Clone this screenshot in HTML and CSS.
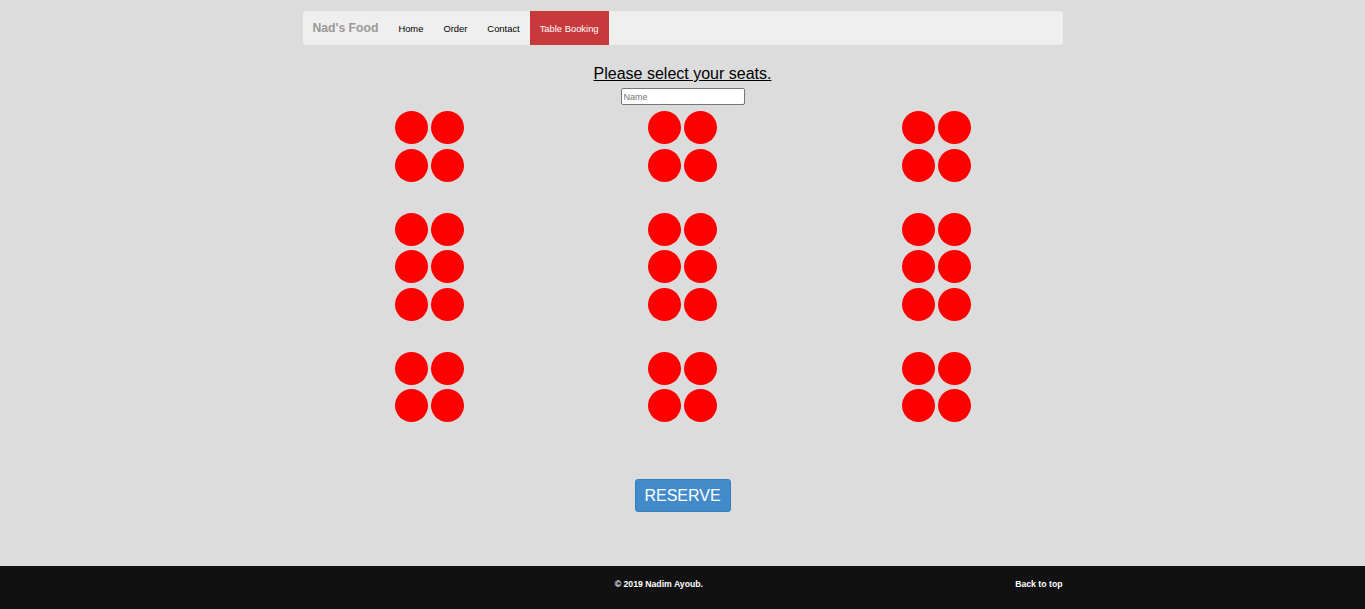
FILE: index.html
```html
<!DOCTYPE html>
<html>
<head>
<meta charset="utf-8">
<title>Table Booking</title>
<link rel="stylesheet" href="styles.css">
</head>
<body>
<div class="page">
  <nav class="navbar">
    <a class="brand" href="#">Nad's Food</a>
    <a class="nav-link" href="#">Home</a>
    <a class="nav-link" href="#">Order</a>
    <a class="nav-link" href="#">Contact</a>
    <a class="nav-link active" href="#">Table Booking</a>
  </nav>
  <main class="booking">
    <h2 class="title">Please select your seats.</h2>
    <input class="name-input" type="text" placeholder="Name">
    <div class="tables">
      <div class="table"><span class="seat"></span><span class="seat"></span><span class="seat"></span><span class="seat"></span></div>
      <div class="table"><span class="seat"></span><span class="seat"></span><span class="seat"></span><span class="seat"></span></div>
      <div class="table"><span class="seat"></span><span class="seat"></span><span class="seat"></span><span class="seat"></span></div>
      <div class="table"><span class="seat"></span><span class="seat"></span><span class="seat"></span><span class="seat"></span><span class="seat"></span><span class="seat"></span></div>
      <div class="table"><span class="seat"></span><span class="seat"></span><span class="seat"></span><span class="seat"></span><span class="seat"></span><span class="seat"></span></div>
      <div class="table"><span class="seat"></span><span class="seat"></span><span class="seat"></span><span class="seat"></span><span class="seat"></span><span class="seat"></span></div>
      <div class="table"><span class="seat"></span><span class="seat"></span><span class="seat"></span><span class="seat"></span></div>
      <div class="table"><span class="seat"></span><span class="seat"></span><span class="seat"></span><span class="seat"></span></div>
      <div class="table"><span class="seat"></span><span class="seat"></span><span class="seat"></span><span class="seat"></span></div>
    </div>
    <button class="reserve" type="button">RESERVE</button>
  </main>
</div>
<footer class="footer">
  <div class="footer-inner">
    <p class="copy">© 2019 Nadim Ayoub.</p>
    <a class="top-link" href="#">Back to top</a>
  </div>
</footer>
</body>
</html>
```

FILE: styles.css
```css
html, body {
  margin: 0;
  padding: 0;
}
body {
  background: #dcdcdc;
  font-family: "Liberation Sans", Arial, sans-serif;
  color: #000;
}
.page {
  width: 760px;
  margin: 0 auto;
  padding-top: 11px;
  height: 566px;
  box-sizing: border-box;
}
.navbar {
  display: flex;
  align-items: stretch;
  height: 34px;
  background: #efefef;
  border-radius: 3px;
}
.brand {
  display: flex;
  align-items: center;
  padding: 0 10px;
  font-size: 12.2px;
  font-weight: bold;
  color: #999;
  text-decoration: none;
}
.nav-link {
  display: flex;
  align-items: center;
  padding: 0 10px;
  font-size: 9.4px;
  color: #000;
  text-decoration: none;
}
.nav-link.active {
  background: #c9383a;
  color: #fff;
}
.booking {
  display: flex;
  flex-direction: column;
  align-items: center;
}
.title {
  margin: 20px 0 0;
  font-size: 16px;
  font-weight: normal;
  line-height: 18px;
  text-decoration: underline;
}
.name-input {
  margin-top: 5px;
  width: 124px;
  height: 17px;
  box-sizing: border-box;
  padding: 0 2px;
  border: 1px solid #767676;
  border-radius: 2px;
  background: #fff;
  font-family: "Liberation Sans", Arial, sans-serif;
  font-size: 9px;
}
.name-input::placeholder {
  color: #757575;
}
.tables {
  margin-top: 6px;
  width: 760px;
  display: grid;
  grid-template-columns: repeat(3, 1fr);
  row-gap: 31px;
  justify-items: center;
}
.table {
  display: grid;
  grid-template-columns: 33px 33px;
  grid-auto-rows: 33px;
  gap: 4.5px 3px;
  padding-left: 1px;
}
.seat {
  display: block;
  width: 33px;
  height: 33px;
  border-radius: 50%;
  background: #ff0000;
}
.reserve {
  margin-top: 57px;
  width: 96px;
  height: 33px;
  background: #428bca;
  border: 1px solid #357ebd;
  border-radius: 3px;
  color: #fff;
  font-family: "Liberation Sans", Arial, sans-serif;
  font-size: 16px;
  padding: 0;
}
.footer {
  background: #111;
  height: 54px;
}
.footer-inner {
  width: 760px;
  margin: 0 auto;
  display: flex;
  align-items: center;
  height: 36px;
}
.copy {
  flex: 1;
  margin: 0;
  text-align: center;
  color: #fff;
  font-size: 8.7px;
  font-weight: bold;
}
.top-link {
  color: #fff;
  font-size: 8.7px;
  font-weight: bold;
  text-decoration: none;
}
```
